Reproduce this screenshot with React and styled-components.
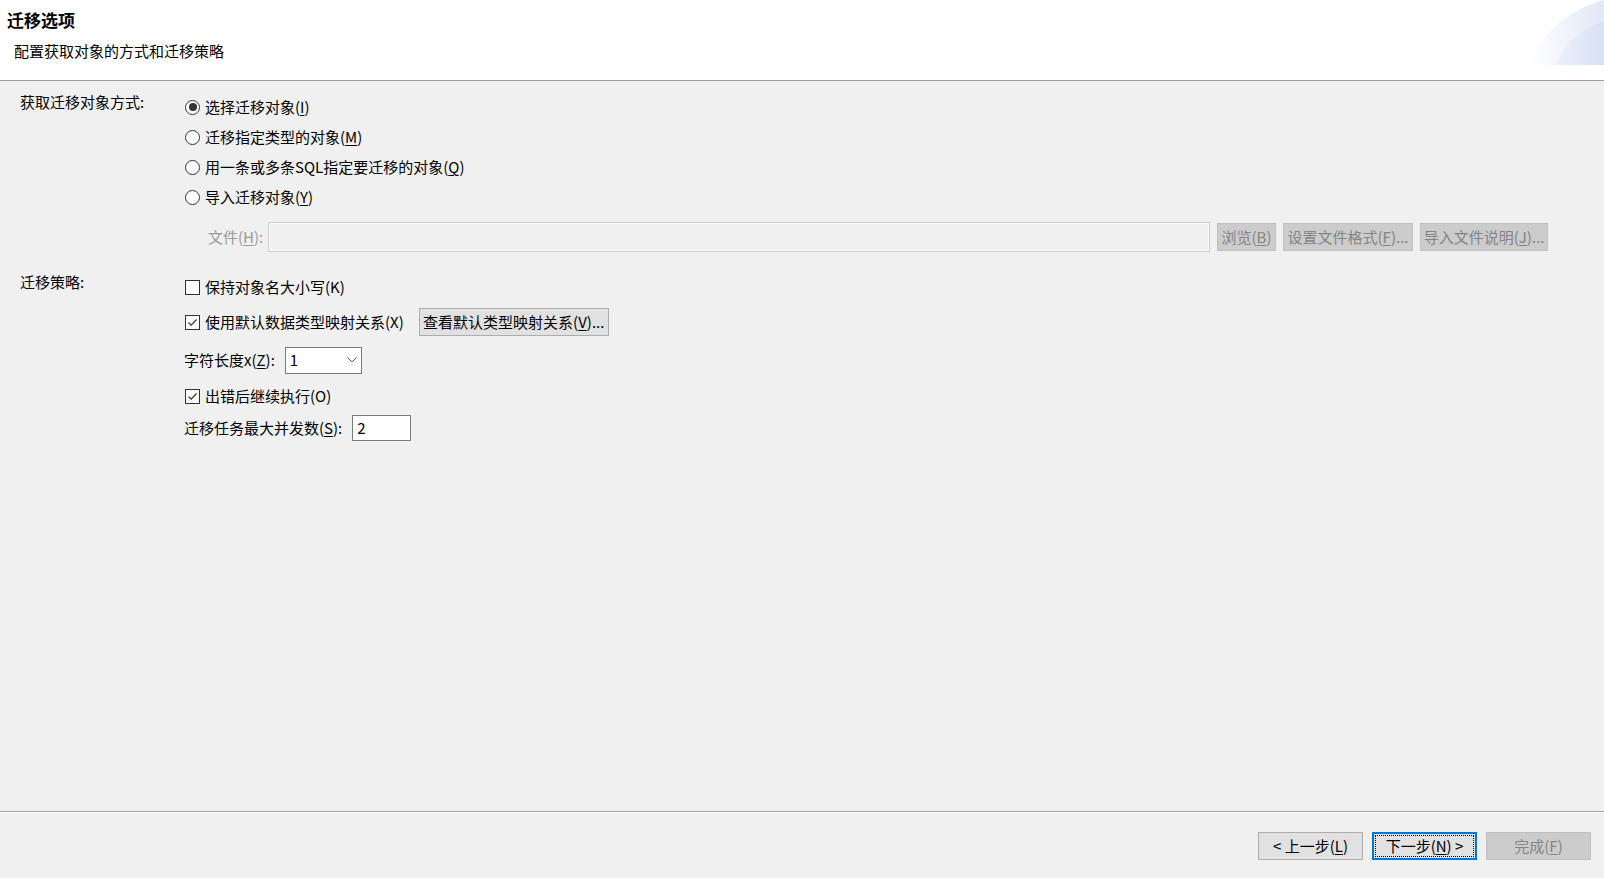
import React from "react";
import styled, { createGlobalStyle } from "styled-components";

const GlobalStyle = createGlobalStyle`
  html, body {
    margin: 0;
    padding: 0;
    background: #f0f0f0;
  }
  body {
    font-family: "Noto Sans CJK SC", "Noto Sans", "Liberation Sans", sans-serif;
    font-size: 15px;
    color: #000;
  }
`;

// layout
const Page = styled.div`
  height: 100vh;
  display: flex;
  flex-direction: column;
  overflow: hidden;
`;
const Header = styled.header`
  height: 80px;
  flex-shrink: 0;
  background: #fff;
  border-bottom: 1px solid #a0a0a0;
  display: flex;
  justify-content: space-between;
  align-items: flex-start;
`;
const HeaderText = styled.div`
  padding-top: 10px;
`;
const Title = styled.h1`
  margin: 0 0 0 7px;
  font-size: 17px;
  line-height: 20px;
  font-weight: 700;
`;
const Subtitle = styled.p`
  margin: 11px 0 0 14px;
  font-size: 15px;
  line-height: 20px;
`;
const Body = styled.main`
  flex: 1;
  padding: 11px 56px 0 20px;
`;
const Section = styled.section`
  display: flex;
  align-items: flex-start;
  margin-top: ${(p) => p.$mt || 0}px;
`;
const SectionLabel = styled.div`
  width: 164px;
  flex-shrink: 0;
  line-height: 20px;
`;
const Controls = styled.div`
  flex: 1;
  display: flex;
  flex-direction: column;
`;
const Row = styled.div`
  display: flex;
  align-items: center;
  height: ${(p) => p.$h || 30}px;
  margin-top: ${(p) => p.$mt || 0}px;
  margin-left: ${(p) => p.$ml || 0}px;
  padding-left: ${(p) => p.$indent || 0}px;
  gap: ${(p) => p.$gap || 0}px;
`;
const Option = styled.label`
  display: flex;
  align-items: center;
  gap: 5px;
  line-height: 20px;
  white-space: nowrap;
`;
const Radio = styled.span`
  width: 13px;
  height: 13px;
  border: 1px solid #333;
  border-radius: 50%;
  background: #fff;
  display: flex;
  align-items: center;
  justify-content: center;
  margin-left: 1px;
  &::after {
    content: "";
    width: 8px;
    height: 8px;
    border-radius: 50%;
    background: ${(p) => (p.$checked ? "#333" : "transparent")};
  }
`;
const Checkbox = styled.span`
  width: 13px;
  height: 13px;
  border: 1px solid #333;
  background: #fff;
  display: flex;
  align-items: center;
  justify-content: center;
  margin-left: 1px;
`;
const Text = styled.span`
  line-height: 20px;
  white-space: nowrap;
  color: ${(p) => (p.$disabled ? "#9a9a9a" : "#000")};
`;
const TextInput = styled.div`
  box-sizing: border-box;
  height: ${(p) => p.$h || 26}px;
  width: ${(p) => (p.$w ? `${p.$w}px` : "auto")};
  flex: ${(p) => (p.$grow ? 1 : "none")};
  border: 1px solid ${(p) => (p.$disabled ? "#cccccc" : "#7a7a7a")};
  background: ${(p) => (p.$disabled ? "#f0f0f0" : "#fff")};
  box-shadow: ${(p) => (p.$disabled ? "inset 0 0 0 1px #fafafa" : "none")};
  padding: 0 4px;
  display: flex;
  align-items: center;
  justify-content: space-between;
  line-height: 20px;
`;
const Button = styled.button`
  box-sizing: border-box;
  height: 28px;
  width: ${(p) => (p.$w ? `${p.$w}px` : "auto")};
  padding: 0 4px;
  font-family: inherit;
  font-size: 15px;
  line-height: 20px;
  white-space: nowrap;
  background: ${(p) => (p.$disabled ? "#cccccc" : "#e1e1e1")};
  color: ${(p) => (p.$disabled ? "#838383" : "#000")};
  border: 1px solid ${(p) => (p.$disabled ? "#bfbfbf" : "#adadad")};
  position: relative;
  cursor: default;
  display: flex;
  align-items: center;
  justify-content: center;
`;
const DefaultButton = styled(Button)`
  border: 2px solid #0078d7;
  &::after {
    content: "";
    position: absolute;
    inset: 1px;
    border: 1px dotted #000;
  }
`;
const Footer = styled.footer`
  height: 67px;
  flex-shrink: 0;
  border-top: 1px solid #a0a0a0;
  box-shadow: inset 0 1px 0 #fff;
  display: flex;
  justify-content: flex-end;
  align-items: flex-start;
  gap: 9px;
  padding: 20px 13px 0 0;
  box-sizing: border-box;
`;
const U = styled.u`
  text-underline-offset: 2px;
`;

const Corner = () => (
  <svg width="76" height="65" viewBox="0 0 76 65">
    <defs>
      <linearGradient id="g1" x1="0" y1="0" x2="1" y2="0">
        <stop offset="0" stopColor="#ffffff" />
        <stop offset="1" stopColor="#e0e7f6" />
      </linearGradient>
      <linearGradient id="g2" x1="0" y1="0" x2="1" y2="0">
        <stop offset="0" stopColor="#ebf0fa" />
        <stop offset="1" stopColor="#d8e1f4" />
      </linearGradient>
    </defs>
    <path d="M0 65 C 14 34, 38 10, 76 0 L76 65 Z" fill="url(#g1)" />
    <path d="M28 65 C 38 42, 54 28, 76 22 L76 65 Z" fill="url(#g2)" />
  </svg>
);

const Check = () => (
  <svg width="11" height="11" viewBox="0 0 11 11">
    <polyline points="1.5,5.5 4.2,8.2 9.5,2.5" fill="none" stroke="#333" strokeWidth="1.2" />
  </svg>
);

const Chevron = () => (
  <svg width="10" height="6" viewBox="0 0 10 6">
    <polyline points="0.5,0.5 5,5 9.5,0.5" fill="none" stroke="#555" strokeWidth="1" />
  </svg>
);

const radios = [
  { text: "选择迁移对象", key: "I", checked: true },
  { text: "迁移指定类型的对象", key: "M" },
  { text: "用一条或多条SQL指定要迁移的对象", key: "Q" },
  { text: "导入迁移对象", key: "Y" },
];

const App = () => {
  return (
    <Page>
      <GlobalStyle />
      <Header>
        <HeaderText>
          <Title>迁移选项</Title>
          <Subtitle>配置获取对象的方式和迁移策略</Subtitle>
        </HeaderText>
        <Corner />
      </Header>

      <Body>
        <Section>
          <SectionLabel>获取迁移对象方式:</SectionLabel>
          <Controls>
            {radios.map((r) => (
              <Row key={r.key}>
                <Option>
                  <Radio $checked={r.checked} />
                  <Text>
                    {r.text}(<U>{r.key}</U>)
                  </Text>
                </Option>
              </Row>
            ))}
            <Row $mt={10} $indent={24} $gap={5}>
              <Text $disabled>
                文件(<U>H</U>):
              </Text>
              <TextInput $h={30} $grow $disabled />
              <Row $gap={7} $h={28} $ml={2}>
                <Button $disabled $w={59}>
                  浏览(<U>B</U>)
                </Button>
                <Button $disabled $w={130}>
                  设置文件格式(<U>F</U>)...
                </Button>
                <Button $disabled $w={128}>
                  导入文件说明(<U>J</U>)...
                </Button>
              </Row>
            </Row>
          </Controls>
        </Section>

        <Section $mt={20}>
          <SectionLabel>迁移策略:</SectionLabel>
          <Controls>
            <Row>
              <Option>
                <Checkbox />
                <Text>保持对象名大小写(K)</Text>
              </Option>
            </Row>
            <Row $mt={5} $gap={15}>
              <Option>
                <Checkbox>
                  <Check />
                </Checkbox>
                <Text>使用默认数据类型映射关系(X)</Text>
              </Option>
              <Button $w={190}>
                查看默认类型映射关系(<U>V</U>)...
              </Button>
            </Row>
            <Row $mt={8} $gap={10}>
              <Text>
                字符长度x(<U>Z</U>):
              </Text>
              <TextInput $w={77} $h={27}>
                <span>1</span>
                <Chevron />
              </TextInput>
            </Row>
            <Row $mt={6}>
              <Option>
                <Checkbox>
                  <Check />
                </Checkbox>
                <Text>出错后继续执行(O)</Text>
              </Option>
            </Row>
            <Row $mt={2} $gap={10}>
              <Text>
                迁移任务最大并发数(<U>S</U>):
              </Text>
              <TextInput $w={59} $h={26}>
                <span>2</span>
              </TextInput>
            </Row>
          </Controls>
        </Section>
      </Body>

      <Footer>
        <Button $w={105}>
          &lt; 上一步(<U>L</U>)
        </Button>
        <DefaultButton $w={105}>
          下一步(<U>N</U>) &gt;
        </DefaultButton>
        <Button $disabled $w={105}>
          完成(<U>F</U>)
        </Button>
      </Footer>
    </Page>
  );
};

export default App;
